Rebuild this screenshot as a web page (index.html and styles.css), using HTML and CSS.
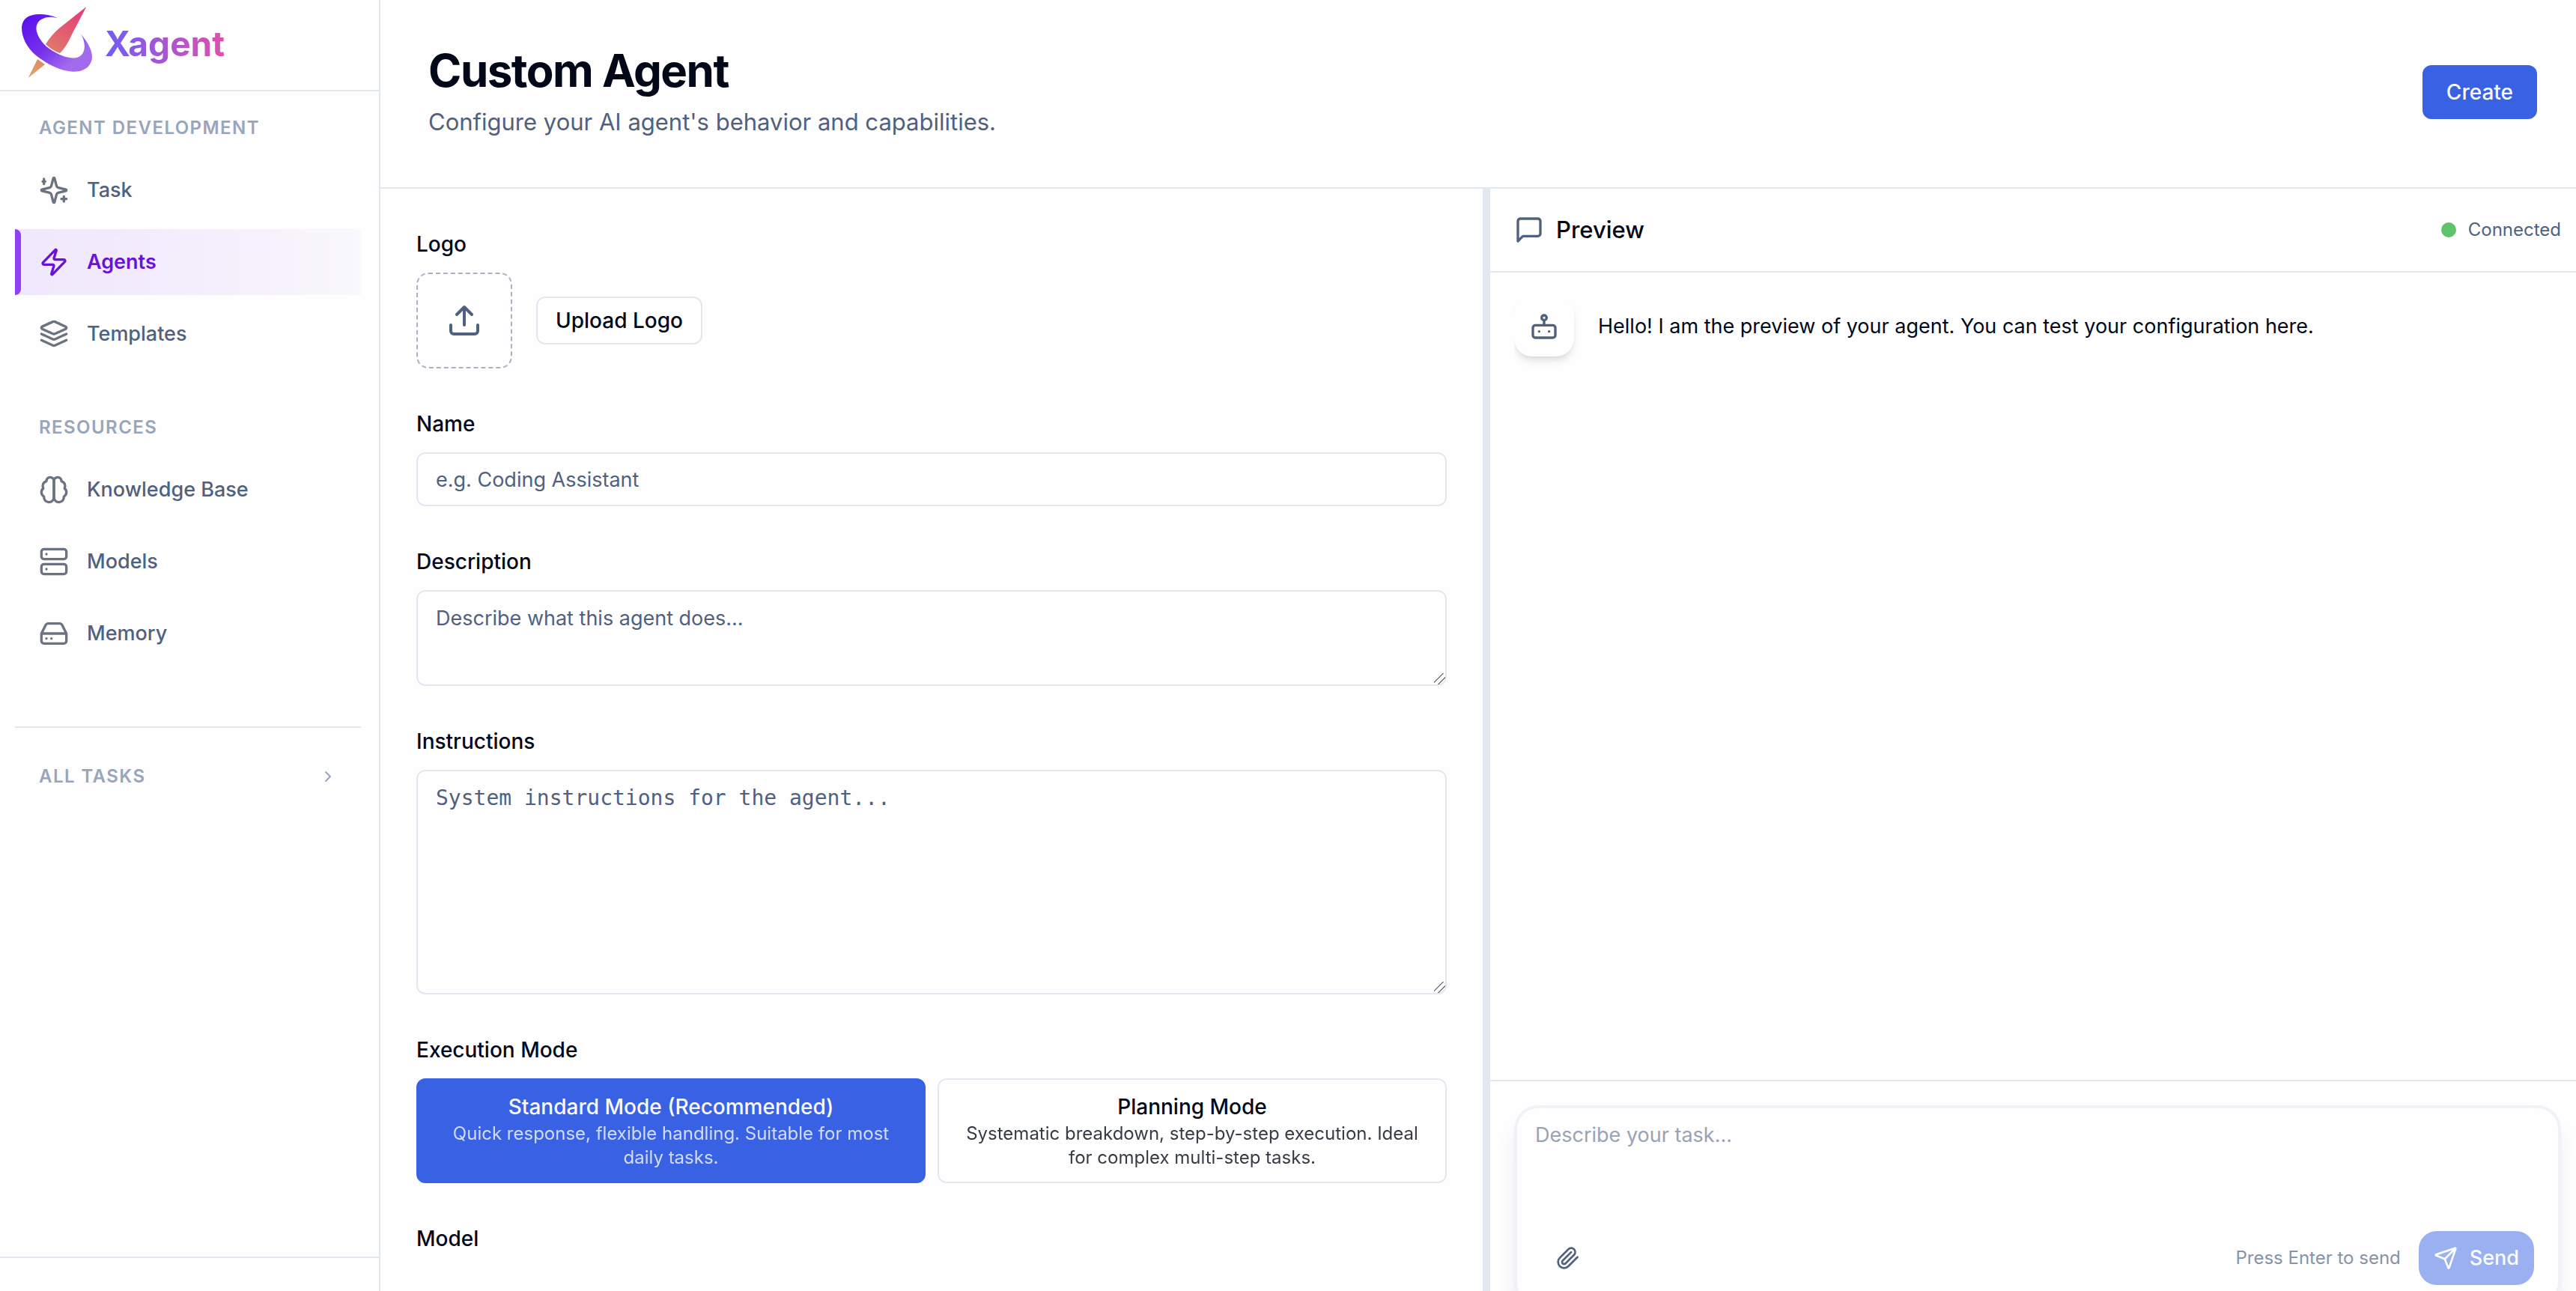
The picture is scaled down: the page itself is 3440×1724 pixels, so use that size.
FILE: index.html
```html
<!DOCTYPE html>
<html lang="en">
<head>
<meta charset="utf-8">
<title>Xagent</title>
<link rel="stylesheet" href="styles.css">
</head>
<body>
<div class="app">
  <aside class="sidebar">
    <a class="brand" href="#">
      <svg class="brand-mark" viewBox="0 2 96 96" aria-hidden="true">
        <defs>
          <linearGradient id="ring" x1="0" y1="0.1" x2="0.9" y2="0.9"><stop offset="0" stop-color="#5a0fee"/><stop offset="0.5" stop-color="#7a33ea"/><stop offset="0.85" stop-color="#a26bee"/></linearGradient>
          <linearGradient id="rocket" gradientUnits="userSpaceOnUse" x1="80" y1="4" x2="12" y2="96"><stop offset="0" stop-color="#e63c78"/><stop offset="0.6" stop-color="#de7a6c"/><stop offset="1" stop-color="#e0a75e"/></linearGradient>
        </defs>
        <path fill="url(#ring)" d="M49 16.3C41 13.5 33 14.5 27 18C21 22 19.500 28 21 34C24 46 34 56 46 62C56 68 68 71 76 68.500C83 66 86 58 84.500 50C84 45 82 41 79.700 37.300C88 47 95 58 95 68C94.500 80 85 88 70 87.700C53 87 35 78 20 66C8 56 1 42 1 29C1.500 17 10 11 25 11C33 11 41 12.500 49 16.300Z"/>
        <path fill="url(#rocket)" d="M87.300 1L68.500 37Q60 56 52 63Q41 59 33 51Q41 38 52 29ZM22 71L32 78L9.700 96Z"/>
      </svg>
      <span class="brand-name">Xagent</span>
    </a>
    <nav class="nav">
      <h2 class="section-title">AGENT DEVELOPMENT</h2>
      <ul class="nav-list">
        <li><a class="nav-item" href="#"><svg class="icon" viewBox="0 0 24 24"><path d="M9.937 15.5A2 2 0 0 0 8.5 14.063l-6.135-1.582a.5.5 0 0 1 0-.962L8.5 9.936A2 2 0 0 0 9.937 8.5l1.582-6.135a.5.5 0 0 1 .963 0L14.063 8.5A2 2 0 0 0 15.5 9.937l6.135 1.581a.5.5 0 0 1 0 .964L15.5 14.063a2 2 0 0 0-1.437 1.437l-1.582 6.135a.5.5 0 0 1-.963 0z"/><path d="M20 17v4M22 19h-4M4 3v4M5 5H3"/></svg>Task</a></li>
        <li><a class="nav-item active" href="#" aria-current="page"><svg class="icon" viewBox="0 0 24 24"><path d="M4 14a1 1 0 0 1-.78-1.63l9.9-10.2a.5.5 0 0 1 .86.46l-1.92 6.02A1 1 0 0 0 13 10h7a1 1 0 0 1 .78 1.63l-9.9 10.2a.5.5 0 0 1-.86-.46l1.92-6.02A1 1 0 0 0 11 14z"/></svg>Agents</a></li>
        <li><a class="nav-item" href="#"><svg class="icon" viewBox="0 0 24 24"><path d="M12.83 2.18a2 2 0 0 0-1.66 0L2.6 6.08a1 1 0 0 0 0 1.83l8.58 3.91a2 2 0 0 0 1.66 0l8.58-3.9a1 1 0 0 0 0-1.83z"/><path d="m22 12-9.17 4.16a2 2 0 0 1-1.66 0L2 12"/><path d="m22 17-9.17 4.16a2 2 0 0 1-1.66 0L2 17"/></svg>Templates</a></li>
      </ul>
      <h2 class="section-title">RESOURCES</h2>
      <ul class="nav-list">
        <li><a class="nav-item" href="#"><svg class="icon" viewBox="0 0 24 24"><path d="M12 5a3 3 0 1 0-5.997.125 4 4 0 0 0-2.526 5.77 4 4 0 0 0 .556 6.588A4 4 0 1 0 12 18Z"/><path d="M12 5a3 3 0 1 1 5.997.125 4 4 0 0 1 2.526 5.77 4 4 0 0 1-.556 6.588A4 4 0 1 1 12 18Z"/></svg>Knowledge Base</a></li>
        <li><a class="nav-item" href="#"><svg class="icon" viewBox="0 0 24 24"><rect width="20" height="8" x="2" y="2" rx="2"/><rect width="20" height="8" x="2" y="14" rx="2"/><path d="M6 6h.01M6 18h.01"/></svg>Models</a></li>
        <li><a class="nav-item" href="#"><svg class="icon" viewBox="0 0 24 24"><path d="M22 12H2M5.45 5.11 2 12v6a2 2 0 0 0 2 2h16a2 2 0 0 0 2-2v-6l-3.45-6.89A2 2 0 0 0 16.76 4H7.24a2 2 0 0 0-1.79 1.11zM6 16h.01M10 16h.01"/></svg>Memory</a></li>
      </ul>
      <button class="all-tasks" type="button"><span>ALL TASKS</span><svg class="icon icon-xs" viewBox="0 0 24 24"><path d="m9 18 6-6-6-6"/></svg></button>
    </nav>
    <div class="sidebar-foot"></div>
  </aside>

  <main class="main">
    <header class="page-head">
      <div>
        <h1 class="page-title">Custom Agent</h1>
        <p class="page-sub">Configure your AI agent's behavior and capabilities.</p>
      </div>
      <button class="btn-primary" type="button">Create</button>
    </header>
    <div class="split">
      <form class="config">
        <div class="field">
          <label for="logo-btn">Logo</label>
          <div class="logo-row">
            <div class="drop"><svg class="icon icon-lg" viewBox="0 0 24 24"><path d="M12 3v12M17 8l-5-5-5 5M21 15v4a2 2 0 0 1-2 2H5a2 2 0 0 1-2-2v-4"/></svg></div>
            <button class="btn-outline" id="logo-btn" type="button">Upload Logo</button>
          </div>
        </div>
        <div class="field">
          <label for="name">Name</label>
          <input class="control" id="name" type="text" placeholder="e.g. Coding Assistant">
        </div>
        <div class="field">
          <label for="desc">Description</label>
          <textarea class="control area" id="desc" placeholder="Describe what this agent does..."></textarea>
        </div>
        <div class="field">
          <label for="instr">Instructions</label>
          <textarea class="control area tall" id="instr" placeholder="System instructions for the agent..."></textarea>
        </div>
        <div class="field">
          <span class="label">Execution Mode</span>
          <div class="modes">
            <button class="mode selected" type="button"><span class="mode-name">Standard Mode (Recommended)</span><span class="mode-desc">Quick response, flexible handling. Suitable for most daily tasks.</span></button>
            <button class="mode" type="button"><span class="mode-name">Planning Mode</span><span class="mode-desc">Systematic breakdown, step-by-step execution. Ideal for complex multi-step tasks.</span></button>
          </div>
        </div>
        <div class="field">
          <span class="label">Model</span>
        </div>
      </form>
      <section class="preview">
        <header class="preview-head">
          <svg class="icon" viewBox="0 0 24 24"><path d="M21 15a2 2 0 0 1-2 2H7l-4 4V5a2 2 0 0 1 2-2h14a2 2 0 0 1 2 2z"/></svg>
          <h2 class="preview-title">Preview</h2>
          <span class="dot"></span>
          <span class="status">Connected</span>
        </header>
        <div class="chat">
          <div class="message">
            <div class="avatar"><svg class="icon" viewBox="0 0 24 24"><rect width="18" height="10" x="3" y="11" rx="2"/><circle cx="12" cy="5" r="2"/><path d="M12 7v4M8 16h.01M16 16h.01"/></svg></div>
            <p class="message-text">Hello! I am the preview of your agent. You can test your configuration here.</p>
          </div>
        </div>
        <div class="composer-wrap">
          <div class="composer">
            <textarea class="composer-input" aria-label="Task" placeholder="Describe your task..."></textarea>
            <div class="composer-bar">
              <button class="attach" type="button" aria-label="Attach file"><svg class="icon icon-sm" viewBox="0 0 24 24"><path d="m21.44 11.05-9.19 9.19a6 6 0 0 1-8.49-8.49l8.57-8.57A4 4 0 1 1 18 8.84l-8.59 8.57a2 2 0 0 1-2.83-2.83l8.49-8.48"/></svg></button>
              <span class="hint">Press Enter to send</span>
              <button class="send" type="button" disabled><svg class="icon icon-sm" viewBox="0 0 24 24"><path d="M14.536 21.686a.5.5 0 0 0 .937-.024l6.5-19a.496.496 0 0 0-.635-.635l-19 6.5a.5.5 0 0 0-.024.937l7.93 3.18a2 2 0 0 1 1.112 1.11zM21.854 2.147l-10.94 10.939"/></svg>Send</button>
            </div>
          </div>
        </div>
      </section>
    </div>
  </main>
</div>
</body>
</html>
```
FILE: styles.css
```css
:root {
  --border: #e2e8f0;
  --text: #020817;
  --muted: #50617f;
  --primary: #3862e3;
}
* { box-sizing: border-box; }
body {
  margin: 0;
  background: #fefefe;
  color: var(--text);
  font: 400 27px/40px Inter, "Liberation Sans", sans-serif;
}
h1, h2, p, ul { margin: 0; padding: 0; }
ul { list-style: none; }
a { color: inherit; text-decoration: none; }
button, input, textarea { font: inherit; color: inherit; margin: 0; }
button { border: 0; background: none; padding: 0; }
.icon {
  width: 40px;
  height: 40px;
  flex: none;
  fill: none;
  stroke: currentColor;
  stroke-width: 2;
  stroke-linecap: round;
  stroke-linejoin: round;
}
.icon-xs { width: 24px; height: 24px; }
.icon-sm { width: 32px; height: 32px; }
.icon-lg { width: 48px; height: 48px; }

.app { display: flex; height: 100vh; overflow: hidden; }

/* Sidebar */
.sidebar {
  width: 508px;
  flex: none;
  display: flex;
  flex-direction: column;
  border-right: 2px solid var(--border);
}
.brand {
  display: flex;
  align-items: center;
  gap: 16px;
  height: 122px;
  flex: none;
  padding: 0 28px 4px;
  border-bottom: 2px solid var(--border);
}
.brand-mark { width: 96px; height: 96px; overflow: visible; }
.brand-name {
  font-size: 46px;
  line-height: 64px;
  font-weight: 700;
  color: transparent;
  background: linear-gradient(90deg, #6f5cf7, #e14fae);
  background-clip: text;
}
.nav { flex: 1; padding: 32px 24px 0 20px; }
.section-title, .all-tasks {
  font-size: 24px;
  line-height: 34px;
  font-weight: 600;
  letter-spacing: 0.06em;
  color: #98a5bb;
  padding: 0 32px;
}
.nav-list { display: grid; gap: 8px; margin: 22px 0 64px; }
.nav-item {
  display: flex;
  align-items: center;
  gap: 24px;
  height: 88px;
  padding: 0 32px;
  font-weight: 500;
  color: var(--muted);
}
.nav-item .icon { color: #6b7280; }
.nav-item.active {
  position: relative;
  font-weight: 600;
  color: #6912d8;
  background: linear-gradient(90deg, #f0e7fc, #f5effc 60%, #f9f8fd);
}
.nav-item.active .icon { color: inherit; }
.nav-item.active::before {
  content: "";
  position: absolute;
  inset: 0 auto 0 0;
  width: 8px;
  border-radius: 0 8px 8px 0;
  background: #9040f5;
}
.all-tasks {
  display: flex;
  width: 100%;
  align-items: center;
  justify-content: space-between;
  margin-top: 80px;
  padding-top: 48px;
  border-top: 2px solid var(--border);
}
.sidebar-foot { height: 46px; border-top: 2px solid var(--border); }

/* Page header */
.main { flex: 1; min-width: 0; display: flex; flex-direction: column; }
.page-head {
  display: flex;
  align-items: center;
  justify-content: space-between;
  padding: 58px 52px 62px 64px;
  border-bottom: 2px solid var(--border);
}
.page-title { font-size: 60px; line-height: 72px; font-weight: 700; letter-spacing: -0.025em; }
.page-sub { margin-top: 8px; font-size: 31px; line-height: 50px; color: var(--muted); }
.btn-primary {
  height: 72px;
  padding: 0 32px;
  border-radius: 12px;
  background: var(--primary);
  color: #f8fafc;
  font-size: 28px;
  font-weight: 500;
}

/* Configuration form */
.split { flex: 1; min-height: 0; display: grid; grid-template-columns: 1472fr 10px 1450fr; }
.config {
  grid-column: 1;
  min-height: 0;
  overflow: hidden;
  display: flex;
  flex-direction: column;
  gap: 60px;
  padding: 60px 48px 0;
}
.field { display: flex; flex-direction: column; gap: 24px; flex: none; }
.field label, .label { font-size: 28px; line-height: 28px; font-weight: 500; }
.logo-row { display: flex; align-items: center; gap: 32px; }
.drop {
  display: grid;
  place-items: center;
  width: 128px;
  height: 128px;
  border: 2px dashed #a9b2c2;
  border-radius: 16px;
  color: var(--muted);
}
.btn-outline {
  height: 64px;
  padding: 0 24px;
  border: 2px solid var(--border);
  border-radius: 12px;
  font-size: 28px;
  font-weight: 500;
}
.control {
  display: block;
  width: 100%;
  height: 72px;
  padding: 0 24px;
  border: 2px solid var(--border);
  border-radius: 12px;
  background: transparent;
}
.control::placeholder { color: var(--muted); opacity: 1; }
.area { height: 128px; padding: 16px 24px; resize: vertical; }
.area::-webkit-resizer {
  background: linear-gradient(135deg, transparent 37%, #777 39% 43%, transparent 45% 64%, #777 66% 70%, transparent 72%);
}
.tall { height: 300px; font-family: "DejaVu Sans Mono", monospace; font-size: 28px; }
.modes { display: grid; grid-template-columns: 1fr 1fr; gap: 16px; }
.mode {
  display: flex;
  flex-direction: column;
  align-items: center;
  padding: 16px 32px;
  border: 2px solid var(--border);
  border-radius: 12px;
  text-align: center;
}
.mode-name { font-size: 28px; font-weight: 500; }
.mode-desc { font-size: 24px; line-height: 32px; opacity: 0.8; }
.mode.selected { background: var(--primary); border-color: var(--primary); color: #f8fafc; }

/* Preview */
.preview {
  grid-column: 3;
  min-height: 0;
  display: flex;
  flex-direction: column;
  box-shadow: -10px 0 0 var(--border);
}
.preview-head {
  display: flex;
  align-items: center;
  gap: 16px;
  height: 112px;
  flex: none;
  padding: 0 20px 0 32px;
  border-bottom: 2px solid var(--border);
}
.preview-head .icon { color: var(--muted); }
.preview-title { flex: 1; font-size: 31px; line-height: 48px; font-weight: 500; }
.dot { width: 20px; height: 20px; border-radius: 50%; background: #5fc36b; }
.status { font-size: 24px; line-height: 32px; color: var(--muted); }
.chat { flex: 1; padding: 0 20px 0 32px; }
.message { display: flex; gap: 32px; align-items: center; overflow: hidden; padding: 32px 0; }
.avatar {
  display: grid;
  place-items: center;
  width: 80px;
  height: 80px;
  flex: none;
  border-radius: 24px;
  background: #fefefe;
  color: var(--muted);
  box-shadow: 0 8px 12px -2px rgb(0 0 0 / 10%), 0 4px 8px -4px rgb(0 0 0 / 10%);
}
.composer-wrap {
  flex: none;
  margin-bottom: -20px;
  padding: 32px 20px 0 32px;
  border-top: 2px solid var(--border);
}
.composer {
  border: 4px solid #eff3f7;
  border-radius: 32px;
  padding: 16px 32px 24px 24px;
  background: #fefefe;
  box-shadow: 0 20px 30px -6px rgb(0 0 0 / 10%), 0 8px 12px -8px rgb(0 0 0 / 10%);
}
.composer-input {
  display: block;
  width: 100%;
  height: 148px;
  padding: 0;
  border: 0;
  background: none;
  resize: none;
}
.composer-input::placeholder { color: #98a3b6; opacity: 1; }
.composer-bar { display: flex; align-items: center; gap: 24px; }
.attach {
  display: grid;
  place-items: center;
  width: 88px;
  height: 72px;
  margin-right: auto;
  color: var(--muted);
}
.hint { font-size: 24px; line-height: 32px; color: #8793a9; }
.send {
  display: flex;
  align-items: center;
  gap: 16px;
  height: 72px;
  padding: 0 20px;
  border-radius: 24px;
  background: #9bb0f1;
  color: #fbfcfe;
  font-weight: 500;
}
```
